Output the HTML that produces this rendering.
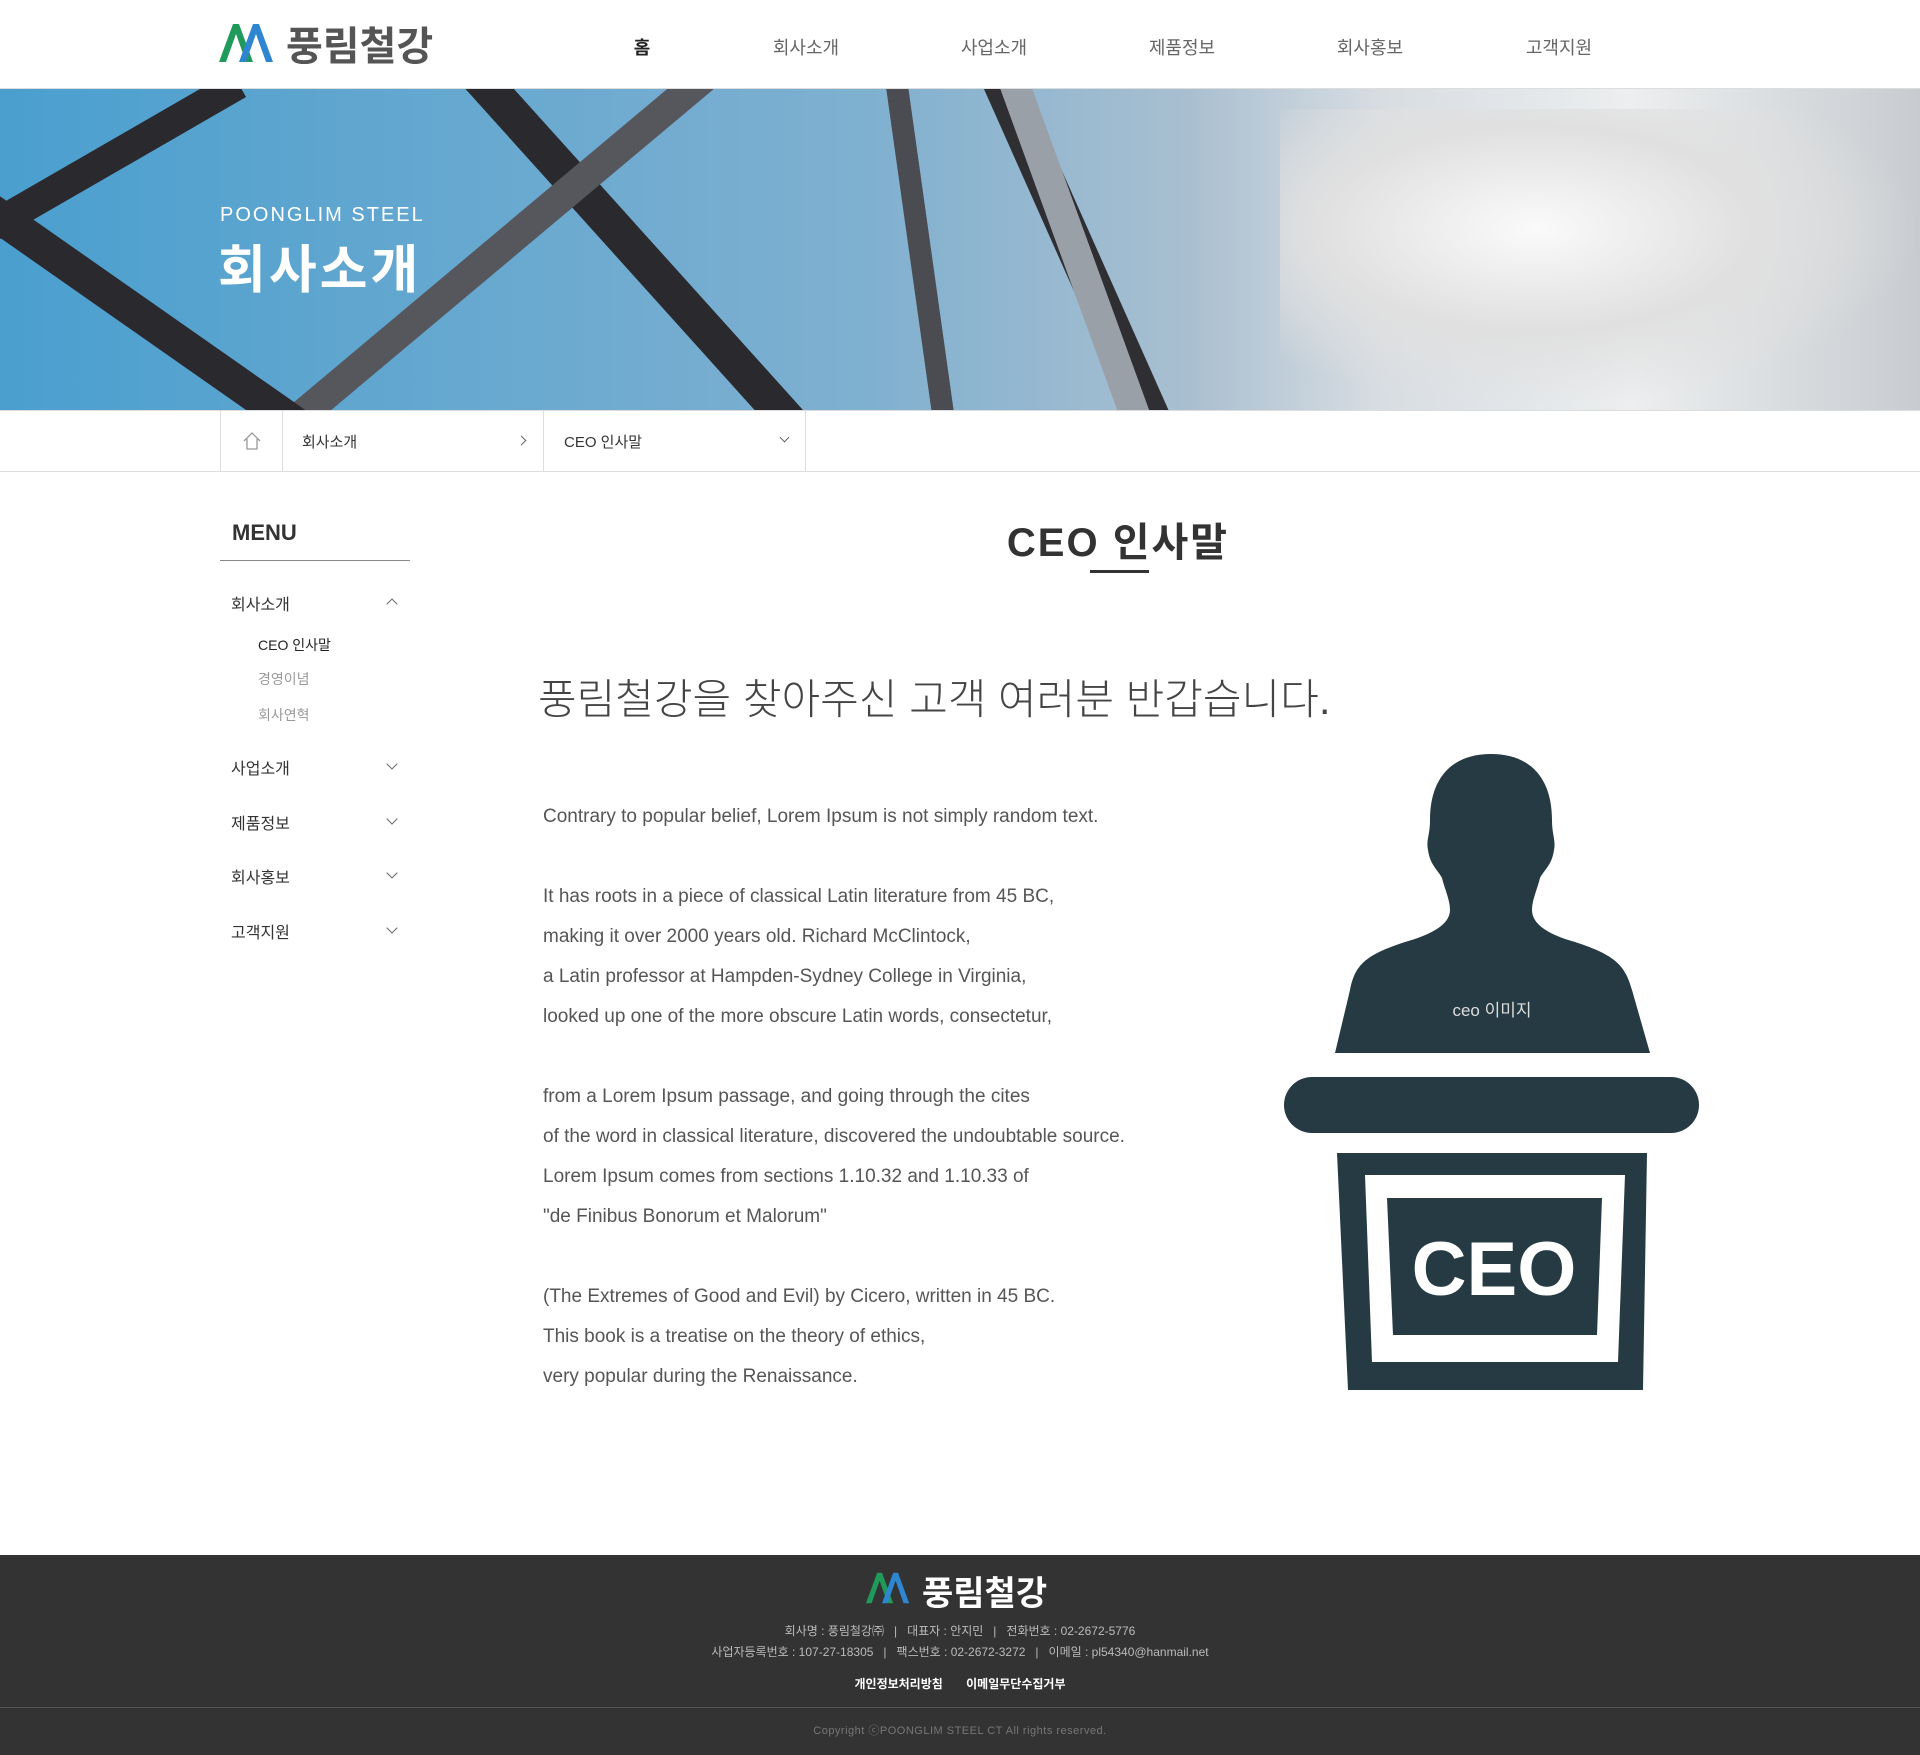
<!DOCTYPE html>
<html><head><meta charset="utf-8"><style>
*{margin:0;padding:0;box-sizing:border-box}
body{width:1920px;height:1755px;position:relative;background:#fff;font-family:"Liberation Sans","Noto Sans CJK KR",sans-serif;color:#333;overflow:hidden}
.a{position:absolute;white-space:nowrap}
.nav{top:34px;font-size:18px;color:#666;transform:translateX(-50%)}
.mi{left:231px;font-size:16px;color:#333}
.ms{left:258px;font-size:14px;color:#999}
.ar{left:388px;width:8px;height:8px;border-right:1.3px solid #666;border-bottom:1.3px solid #666;transform:rotate(45deg)}
.p{left:543px;font-size:19px;color:#555}
</style></head><body>
<svg class="a" style="left:219px;top:22px" width="60" height="42" viewBox="0 0 60 42">
<path d="M0 40 L14 2 L20 2 L34 40 L27 40 L17 12 L7 40Z" fill="#1f9a5a"/>
<path d="M20 40 L34 2 L40 2 L54 40 L47 40 L37 12 L27 40Z" fill="#2f86d0"/>
</svg>
<div class="a" style="left:286px;top:14px;font-size:40px;font-weight:bold;color:#555">풍림철강</div>
<div class="a nav" style="left:642px;color:#222;font-weight:bold">홈</div>
<div class="a nav" style="left:806px">회사소개</div>
<div class="a nav" style="left:994px">사업소개</div>
<div class="a nav" style="left:1182px">제품정보</div>
<div class="a nav" style="left:1370px">회사홍보</div>
<div class="a nav" style="left:1559px">고객지원</div>
<div class="a" style="left:0;top:88px;width:1920px;height:1px;background:#ddd"></div>
<div class="a" style="left:0;top:89px;width:1920px;height:321px;overflow:hidden;background:linear-gradient(90deg,#4a9fcf 0%,#7fb0d0 45%,#a9bfd0 62%,#d8dde2 72%,#eceeef 85%,#c8ccd0 100%)">
<div class="a" style="left:1280px;top:20px;width:640px;height:300px;background:radial-gradient(ellipse at 40% 40%,#fafafa 0,#e0e0e0 40%,transparent 70%)"></div>
<div class="a" style="left:250px;top:160px;width:800px;height:36px;background:#2a2a2e;transform:rotate(48deg)"></div>
<div class="a" style="left:120px;top:170px;width:700px;height:30px;background:#55575c;transform:rotate(-40deg)"></div>
<div class="a" style="left:800px;top:150px;width:560px;height:38px;background:#2e2e33;transform:rotate(66deg)"></div>
<div class="a" style="left:720px;top:150px;width:400px;height:22px;background:#4a4c52;transform:rotate(82deg)"></div>
<div class="a" style="left:860px;top:160px;width:440px;height:30px;background:#9aa0a8;transform:rotate(70deg)"></div>
<div class="a" style="left:-60px;top:60px;width:320px;height:30px;background:#2a2a2e;transform:rotate(-30deg)"></div>
<div class="a" style="left:-80px;top:230px;width:500px;height:34px;background:#2a2a2e;transform:rotate(35deg)"></div>
</div>
<div class="a" style="left:220px;top:204px;font-size:20px;color:#fff;letter-spacing:2px">POONGLIM STEEL</div>
<div class="a" style="left:218px;top:228px;font-size:52px;color:#fff;font-weight:bold;letter-spacing:3px">회사소개</div>
<div class="a" style="left:0;top:410px;width:1920px;height:62px;border-top:1px solid #ddd;border-bottom:1px solid #ddd"></div>
<div class="a" style="left:220px;top:410px;width:1px;height:62px;background:#ddd"></div>
<div class="a" style="left:282px;top:410px;width:1px;height:62px;background:#ddd"></div>
<div class="a" style="left:543px;top:410px;width:1px;height:62px;background:#ddd"></div>
<div class="a" style="left:805px;top:410px;width:1px;height:62px;background:#ddd"></div>
<svg class="a" style="left:242px;top:431px" width="20" height="20" viewBox="0 0 20 20"><path d="M2 10 L10 2 L18 10 M5 8 V18 H15 V8" fill="none" stroke="#999" stroke-width="1.3"/></svg>
<div class="a" style="left:302px;top:431px;font-size:15px;color:#333">회사소개</div>
<div class="a" style="left:518px;top:437px;width:7px;height:7px;border-right:1.2px solid #666;border-top:1.2px solid #666;transform:rotate(45deg)"></div>
<div class="a" style="left:564px;top:431px;font-size:15px;color:#333">CEO 인사말</div>
<div class="a" style="left:781px;top:434px;width:7px;height:7px;border-right:1.2px solid #666;border-bottom:1.2px solid #666;transform:rotate(45deg)"></div>
<div class="a" style="left:232px;top:520px;font-size:22px;font-weight:bold;color:#333">MENU</div>
<div class="a" style="left:220px;top:560px;width:190px;height:1px;background:#888"></div>
<div class="a mi" style="top:591px">회사소개</div>
<div class="a ar" style="top:600px;transform:rotate(225deg)"></div>
<div class="a ms" style="top:635px;color:#222">CEO 인사말</div>
<div class="a ms" style="top:669px">경영이념</div>
<div class="a ms" style="top:705px">회사연혁</div>
<div class="a mi" style="top:755px">사업소개</div><div class="a ar" style="top:760px"></div>
<div class="a mi" style="top:810px">제품정보</div><div class="a ar" style="top:815px"></div>
<div class="a mi" style="top:864px">회사홍보</div><div class="a ar" style="top:869px"></div>
<div class="a mi" style="top:919px">고객지원</div><div class="a ar" style="top:924px"></div>
<div class="a" style="left:1118px;top:510px;transform:translateX(-50%);font-size:40px;font-weight:bold;color:#333;letter-spacing:2px">CEO 인사말</div>
<div class="a" style="left:1090px;top:570px;width:59px;height:3px;background:#333"></div>
<div class="a" style="left:538px;top:666px;font-size:42px;font-weight:300;color:#444;letter-spacing:0">풍림철강을 찾아주신 고객 여러분 반갑습니다.</div>
<div class="a p" style="top:806px">Contrary to popular belief, Lorem Ipsum is not simply random text.</div>
<div class="a p" style="top:886px">It has roots in a piece of classical Latin literature from 45 BC,</div>
<div class="a p" style="top:926px">making it over 2000 years old. Richard McClintock,</div>
<div class="a p" style="top:966px">a Latin professor at Hampden-Sydney College in Virginia,</div>
<div class="a p" style="top:1006px">looked up one of the more obscure Latin words, consectetur,</div>
<div class="a p" style="top:1086px">from a Lorem Ipsum passage, and going through the cites</div>
<div class="a p" style="top:1126px">of the word in classical literature, discovered the undoubtable source.</div>
<div class="a p" style="top:1166px">Lorem Ipsum comes from sections 1.10.32 and 1.10.33 of</div>
<div class="a p" style="top:1206px">"de Finibus Bonorum et Malorum"</div>
<div class="a p" style="top:1286px">(The Extremes of Good and Evil) by Cicero, written in 45 BC.</div>
<div class="a p" style="top:1326px">This book is a treatise on the theory of ethics,</div>
<div class="a p" style="top:1366px">very popular during the Renaissance.</div>
<svg class="a" style="left:1280px;top:750px" width="425" height="645" viewBox="0 0 425 645">
<g fill="#263a44">
<path d="M211 4 C170 4 150 30 150 70 C150 85 146 90 148 100 C150 115 158 120 162 128 C165 140 170 150 170 160 C170 175 150 185 125 192 C85 205 75 215 70 240 L55 303 L370 303 L352 240 C345 215 335 205 295 192 C270 185 252 175 252 160 C252 150 257 140 260 128 C264 120 272 115 274 100 C276 90 272 85 272 70 C272 30 252 4 211 4Z"/>
<rect x="4" y="327" width="415" height="56" rx="28"/>
<path d="M57 403 H367 L363 640 H68Z"/>
</g>
<path d="M85 425 H345 L338 612 H92Z" fill="#fff"/>
<path d="M107 448 H322 L317 585 H113Z" fill="#263a44"/>
<text x="214" y="545" text-anchor="middle" font-family="Liberation Sans,sans-serif" font-size="76" font-weight="bold" fill="#fff">CEO</text>
<text x="212" y="266" text-anchor="middle" font-family="Liberation Sans,Noto Sans CJK KR,sans-serif" font-size="17" fill="#ddd">ceo 이미지</text>
</svg>
<div class="a" style="left:0;top:1555px;width:1920px;height:200px;background:#333"></div>
<svg class="a" style="left:866px;top:1570px" width="48" height="36" viewBox="0 0 60 42">
<path d="M0 40 L14 2 L20 2 L34 40 L27 40 L17 12 L7 40Z" fill="#1f9a5a"/>
<path d="M20 40 L34 2 L40 2 L54 40 L47 40 L37 12 L27 40Z" fill="#2f86d0"/>
</svg>
<div class="a" style="left:922px;top:1566px;font-size:34px;font-weight:bold;color:#fff">풍림철강</div>
<div class="a" style="left:960px;top:1622px;transform:translateX(-50%);font-size:12px;color:#bbb">회사명 : 풍림철강㈜ &nbsp;&nbsp;| &nbsp;&nbsp;대표자 : 안지민 &nbsp;&nbsp;| &nbsp;&nbsp;전화번호 : 02-2672-5776</div>
<div class="a" style="left:960px;top:1643px;transform:translateX(-50%);font-size:12px;color:#bbb">사업자등록번호 : 107-27-18305 &nbsp;&nbsp;| &nbsp;&nbsp;팩스번호 : 02-2672-3272 &nbsp;&nbsp;| &nbsp;&nbsp;이메일 : pl54340@hanmail.net</div>
<div class="a" style="left:960px;top:1675px;transform:translateX(-50%);font-size:12px;color:#fff;font-weight:bold">개인정보처리방침 &nbsp;&nbsp;&nbsp;&nbsp;&nbsp; 이메일무단수집거부</div>
<div class="a" style="left:0;top:1707px;width:1920px;height:1px;background:#555"></div>
<div class="a" style="left:960px;top:1722px;transform:translateX(-50%);font-size:11px;color:#777;letter-spacing:0.5px">Copyright ⓒPOONGLIM STEEL CT All rights reserved.</div>
</body></html>
